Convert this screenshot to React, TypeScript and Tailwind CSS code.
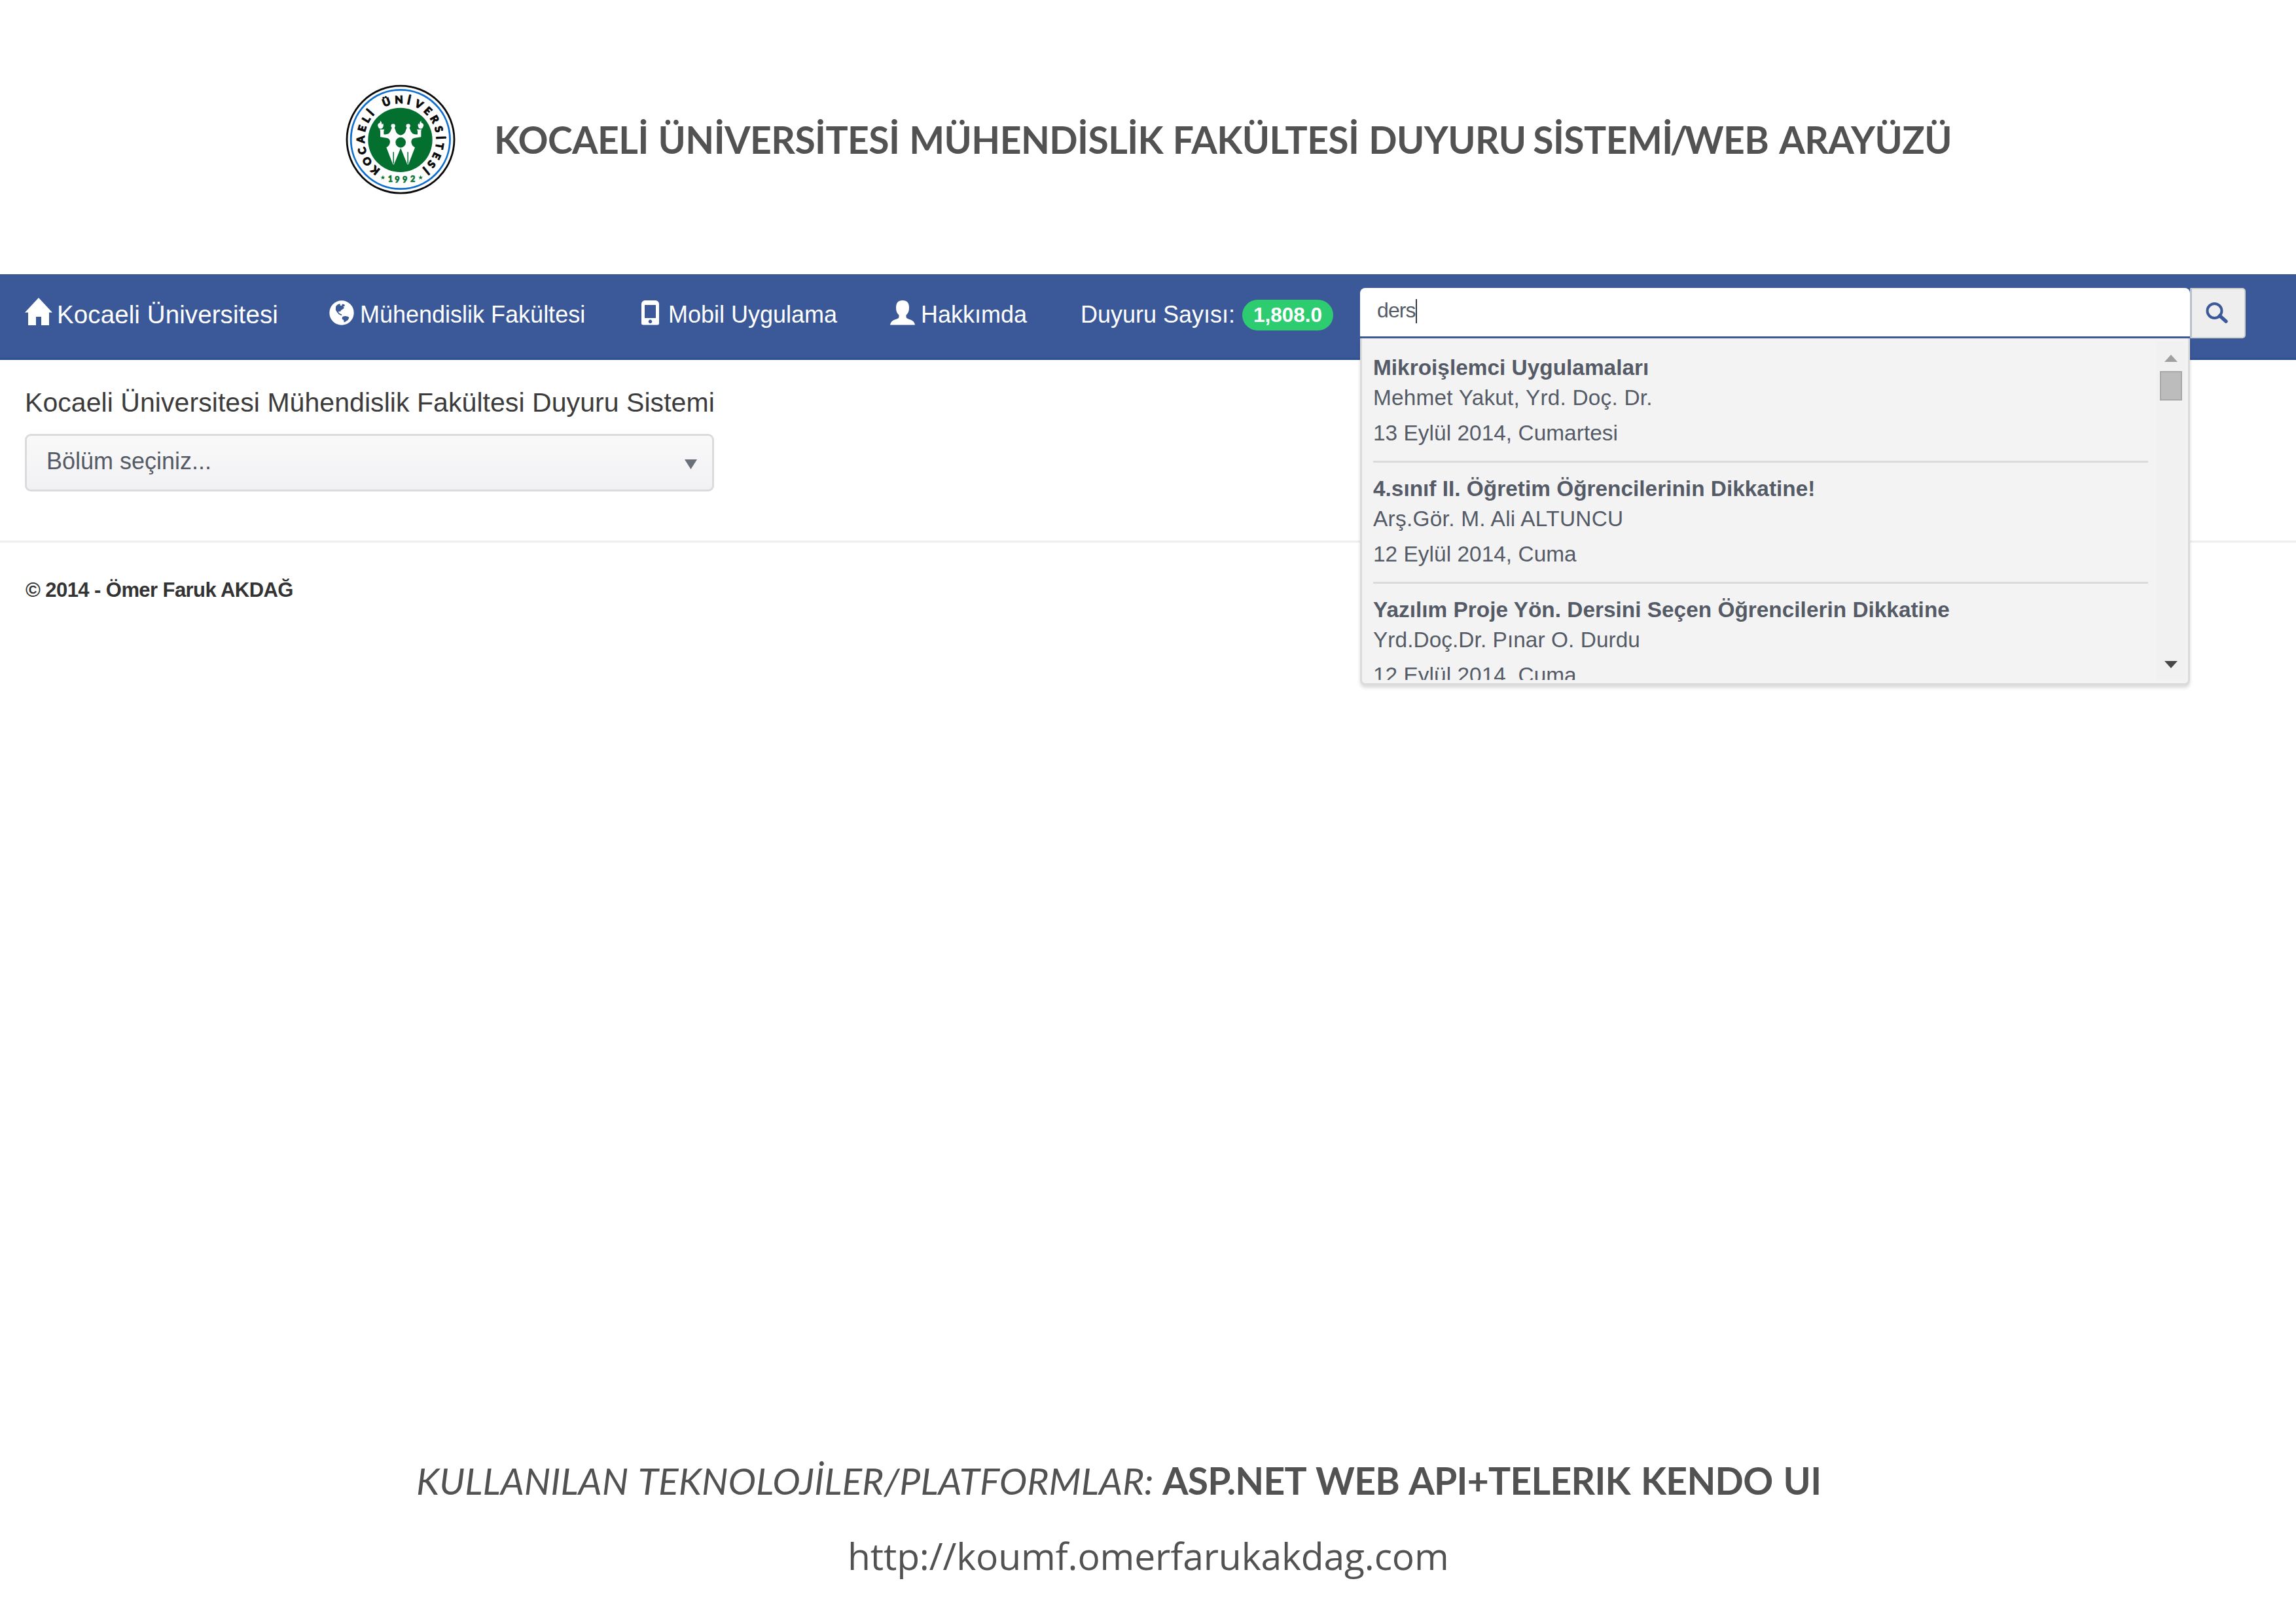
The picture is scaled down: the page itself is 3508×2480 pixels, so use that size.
import React from "react";

const ringLetters: [string, number][] = [
  ["K", -141], ["O", -123.4], ["C", -106.8], ["A", -90], ["E", -74], ["L", -59.5], ["İ", -48],
  ["Ü", -20.5], ["N", -2], ["İ", 12.5], ["V", 28], ["E", 44], ["R", 59.5], ["S", 75],
  ["İ", 87.5], ["T", 99.8], ["E", 114.5], ["S", 128.5], ["İ", 140.7],
];

const figure =
  "M211 262H233L230 270V285Q258 288 264 262L268 254H279L283 264Q288 287 308 289V298A24 24 0 0 0 308 346L277 423H272L242 345Q259 336 259 318Q258 300 232 300L214 297V268Z";
const flame = "M203 247Q200 236 212 232Q216 228 213 222Q222 228 221 240Q226 238 226 234Q232 246 224 256Q216 262 208 257Z";
const star = "0,-11 2.8,-3.4 10.5,-3.3 4.4,1.4 6.5,8.9 0,4.6 -6.5,8.9 -4.4,1.4 -10.5,-3.3 -2.8,-3.4";

function Logo() {
  return (
    <svg className="h-[170px] w-[170px] shrink-0" viewBox="52 53 510 510">
      <circle cx="307" cy="308.5" r="246" fill="#fff" stroke="#0a0a0a" strokeWidth="8.500" />
      <circle cx="306.5" cy="308" r="227" fill="none" stroke="#0f6fd0" strokeWidth="8.500" />
      <circle cx="305.5" cy="310.5" r="147.500" fill="#04702f" />
      <g fontFamily="Lato, sans-serif" fontWeight="900" fontSize="48" textAnchor="middle" fill="#0a0a0a" stroke="#0a0a0a" strokeWidth="3">
        {ringLetters.map(([ch, a], i) => (
          <text key={i} x="306" y="143" transform={`rotate(${a} 306 308)`}>{ch}</text>
        ))}
      </g>
      <g fontFamily="Lato, sans-serif" fontWeight="900" fontSize="38" textAnchor="middle" fill="#04702f" stroke="#04702f" strokeWidth="2">
        <text x="260" y="504">1</text>
        <text x="292" y="507">9</text>
        <text x="327" y="507">9</text>
        <text x="363" y="504">2</text>
      </g>
      <polygon points={star} transform="translate(226 483)" fill="#04702f" />
      <polygon points={star} transform="translate(399 483)" fill="#04702f" />
      <g fill="#fff">
        <g>
          <path d={figure} />
          <path d={flame} />
          <circle cx="273" cy="246" r="9.500" />
        </g>
        <g transform="translate(615 0) scale(-1 1)">
          <path d={figure} />
          <path d={flame} />
          <circle cx="273" cy="246" r="9.500" />
        </g>
      </g>
      <path d="M274.500 366V420M340.500 366V420" stroke="#04702f" strokeWidth="4.500" />
    </svg>
  );
}

function HomeIcon() {
  return (
    <svg className="-mt-[10px] h-[42px] w-[42px]" viewBox="0 0 42 42" fill="#fff">
      <path d="M21 0L42 22.500H37V42H25V29H17V42H5V22.500H0Z" />
    </svg>
  );
}

function GlobeIcon() {
  return (
    <svg className="-mt-[6px] h-[38px] w-[38px]" viewBox="67 57 116 114">
      <circle cx="125" cy="114" r="57" fill="#fff" />
      <path
        d="M98 84Q106 72 119 72L117 79L125 81L128 73L138 75L140 83L132 84L137 91L130 97L122 102L119 109L112 106L110 112L117 118L126 122L124 127L112 121L104 112L97 100Z"
        fill="#3b5998"
      />
      <path d="M128 133Q140 126 152 131L160 135L155 147L142 156L136 158L135 148L127 143Z" fill="#3b5998" />
    </svg>
  );
}

function PhoneIcon() {
  return (
    <svg className="-mt-[6px] h-[38px] w-[27px]" viewBox="0 0 27 38">
      <path
        fillRule="evenodd"
        fill="#fff"
        d="M5 0H22Q27 1 27 6V35Q27 37.500 24 37.500H3Q0 37.500 0 35V6Q0 1 5 0ZM5 7V27H22V7ZM13.500 29.500A2.800 2.800 0 1 0 13.510 29.500Z"
      />
    </svg>
  );
}

function UserIcon() {
  return (
    <svg className="-mt-[6px] h-[38px] w-[38px]" viewBox="0 0 38 38" fill="#fff">
      <path d="M19 0Q29 0 29 11Q29 19 24.500 22.500V26Q26 28 31 29.500Q37 31.500 38 37.500H0Q1 31.500 7 29.500Q12 28 13.500 26V22.500Q9 19 9 11Q9 0 19 0Z" />
    </svg>
  );
}

function SearchIcon() {
  return (
    <svg className="h-[32px] w-[34px]" viewBox="0 0 34 32" fill="none" stroke="#3b5998">
      <circle cx="13.500" cy="13" r="11" strokeWidth="4" />
      <path d="M21.500 20.500L31 29" strokeWidth="5.500" strokeLinecap="round" />
    </svg>
  );
}

const results = [
  { title: "Mikroişlemci Uygulamaları", who: "Mehmet Yakut, Yrd. Doç. Dr.", date: "13 Eylül 2014, Cumartesi", ls: "tracking-[0.2px]" },
  { title: "4.sınıf II. Öğretim Öğrencilerinin Dikkatine!", who: "Arş.Gör. M. Ali ALTUNCU", date: "12 Eylül 2014, Cuma", ls: "tracking-[0.28px]" },
  { title: "Yazılım Proje Yön. Dersini Seçen Öğrencilerin Dikkatine", who: "Yrd.Doç.Dr. Pınar O. Durdu", date: "12 Eylül 2014, Cuma", ls: "tracking-[0.06px]" },
];

function ResultsPopup() {
  return (
    <div className="absolute left-0 top-[77px] z-10 flex h-[530px] w-[1268px] rounded-b-[8px] border-x-[3px] border-b-[3px] border-[#dbdbde] bg-[#f3f3f4] pb-[5px] shadow-[0_4px_5px_rgba(0,0,0,0.14)]">
      <div className="h-full w-[1214px] overflow-hidden pl-[17px] pt-[22px]">
        {results.map((r) => (
          <div
            key={r.title}
            className="mb-[17px] w-[1184px] whitespace-nowrap border-b-[3px] border-[#dbdbde] pb-[19px] text-[33.4px] leading-[46px] text-[#555b66]"
          >
            <div className="font-bold">{r.title}</div>
            <div className={r.ls}>{r.who}</div>
            <div className="mt-[8px] tracking-[0.04px]">{r.date}</div>
          </div>
        ))}
      </div>
      <div className="mt-[5px] flex w-[44px] flex-col items-center bg-[#f1f1f1]">
        <svg className="mt-[20px] h-[11px] w-[20px]" viewBox="0 0 20 11"><path d="M10 0L20 11H0Z" fill="#a0a0a0" /></svg>
        <div className="mt-[14px] h-[45px] w-[34px] border-[2px] border-[#a8a8a8] bg-[#bcbcbc]" />
        <svg className="mb-[18px] mt-auto h-[11px] w-[20px]" viewBox="0 0 20 11"><path d="M0 0H20L10 11Z" fill="#484848" /></svg>
      </div>
    </div>
  );
}

export default function App() {
  return (
    <div className="h-[2480px] w-[3508px] overflow-hidden bg-white font-['Liberation_Sans',Arial,sans-serif]">
      <header className="h-[419px] pl-[527px] pt-[128px]">
        <div className="flex h-[170px] items-center gap-[58px]">
          <Logo />
          <h1 className="whitespace-nowrap font-['Lato',sans-serif] text-[57px] font-bold leading-[81px] tracking-[-0.55px] text-[#525252] [word-spacing:1.5px]">
            KOCAELİ ÜNİVERSİTESİ MÜHENDİSLİK FAKÜLTESİ DUYURU <span className="-ml-[4px]">SİSTEM</span><span className="tracking-[-4.5px]">İ/</span>WEB
            <span className="pl-[3px]"> ARAYÜZÜ</span>
          </h1>
        </div>
      </header>

      <nav className="relative flex h-[131px] whitespace-nowrap border-b-[3px] border-[#2f4f90] bg-[#3b5998] pl-[38px] text-[36px] leading-[64px] text-white">
        <div className="mt-[30px] flex h-[64px] w-[465px] shrink-0 items-center gap-[7px]">
          <HomeIcon />
          <span className="text-[38.5px] leading-[62px] tracking-[0.1px]">Kocaeli Üniversitesi</span>
        </div>
        <div className="mt-[30px] flex h-[64px] w-[477px] shrink-0 items-center gap-[9px]">
          <GlobeIcon />
          <span>Mühendislik Fakültesi</span>
        </div>
        <div className="mt-[30px] flex h-[64px] w-[380px] shrink-0 items-center gap-[14px]">
          <PhoneIcon />
          <span>Mobil Uygulama</span>
        </div>
        <div className="mt-[30px] flex h-[64px] w-[291px] shrink-0 items-center gap-[9px]">
          <UserIcon />
          <span>Hakkımda</span>
        </div>
        <div className="mt-[30px] flex h-[64px] w-[427px] shrink-0 items-center">
          <span className="w-[247px]">Duyuru Sayısı:</span>
          <span className="flex h-[47px] w-[139px] items-center justify-center rounded-full bg-[#2ecc71] text-[31.5px] font-bold leading-[47px]">
            1,808.0
          </span>
        </div>
        <div className="relative mt-[21px] flex h-[77px] w-[1353px] shrink-0">
          <div className="h-[77px] w-[1268px] shrink-0 border-b-[3px] border-[#3b5998] bg-[#3b5998]">
            <div className="flex h-[74px] rounded-t-[8px] bg-white pl-[26px] text-[#555b66]">
              <span className="text-[32px] leading-[68px] tracking-[-0.9px]">ders</span>
              <span className="mt-[17px] h-[37px] w-[2px] bg-[#333a48]" />
            </div>
          </div>
          <button className="flex h-[77px] w-[85px] items-center justify-center rounded-r-[5px] border-[2px] border-l-[3px] border-[#d0d0cc] border-l-[#b8c0d0] bg-[#eeeeee] pb-[1px] pr-[4px]">
            <SearchIcon />
          </button>
          <ResultsPopup />
        </div>
      </nav>

      <main className="h-[276px] pl-[38px] pt-[35px]">
        <h2 className="h-[60px] whitespace-nowrap text-[41px] leading-[61px] tracking-[0.06px] text-[#3c3c3c]">
          Kocaeli Üniversitesi Mühendislik Fakültesi Duyuru Sistemi
        </h2>
        <div className="mt-[18px] flex h-[88px] w-[1053px] items-center justify-between rounded-[9px] border-[3px] border-[#dbdbde] bg-gradient-to-b from-[#f9f9fa] to-[#f1f1f3] pl-[30px] pr-[23px] text-[36px] leading-[80px] text-[#555b66]">
          <span className="-mt-[4px]">Bölüm seçiniz...</span>
          <svg className="mt-[4px] h-[15px] w-[19px]" viewBox="0 0 19 15"><path d="M0 0H19L9.500 15Z" fill="#6a6f7a" /></svg>
        </div>
      </main>

      <footer className="h-[1401px] border-t-[3px] border-[#eeeeee] pl-[39px] pt-[43px]">
        <p className="whitespace-nowrap text-[31px] font-bold leading-[60px] tracking-[-0.57px] text-[#333333]">
          © 2014 - Ömer Faruk AKDAĞ
        </p>
      </footer>

      <section className="text-[#525252]">
        <p className="flex h-[70px] whitespace-nowrap pl-[636px] font-['Lato',sans-serif] text-[57px] leading-[70px]">
          <em className="w-[1140px] tracking-[0.05px] [word-spacing:3px]">KULLANILAN TEKNOLOJİLER/PLATFORMLAR:</em>
          <strong className="font-bold tracking-[-0.74px] [word-spacing:3px]">ASP.NET WEB API+TELERIK KENDO UI</strong>
        </p>
        <p className="mt-[40px] whitespace-nowrap pl-[1295px] font-['Open_Sans',sans-serif] text-[57px] leading-[80px] tracking-[-0.15px]">
          http://koumf.omerfarukakdag.com
        </p>
      </section>
    </div>
  );
}
